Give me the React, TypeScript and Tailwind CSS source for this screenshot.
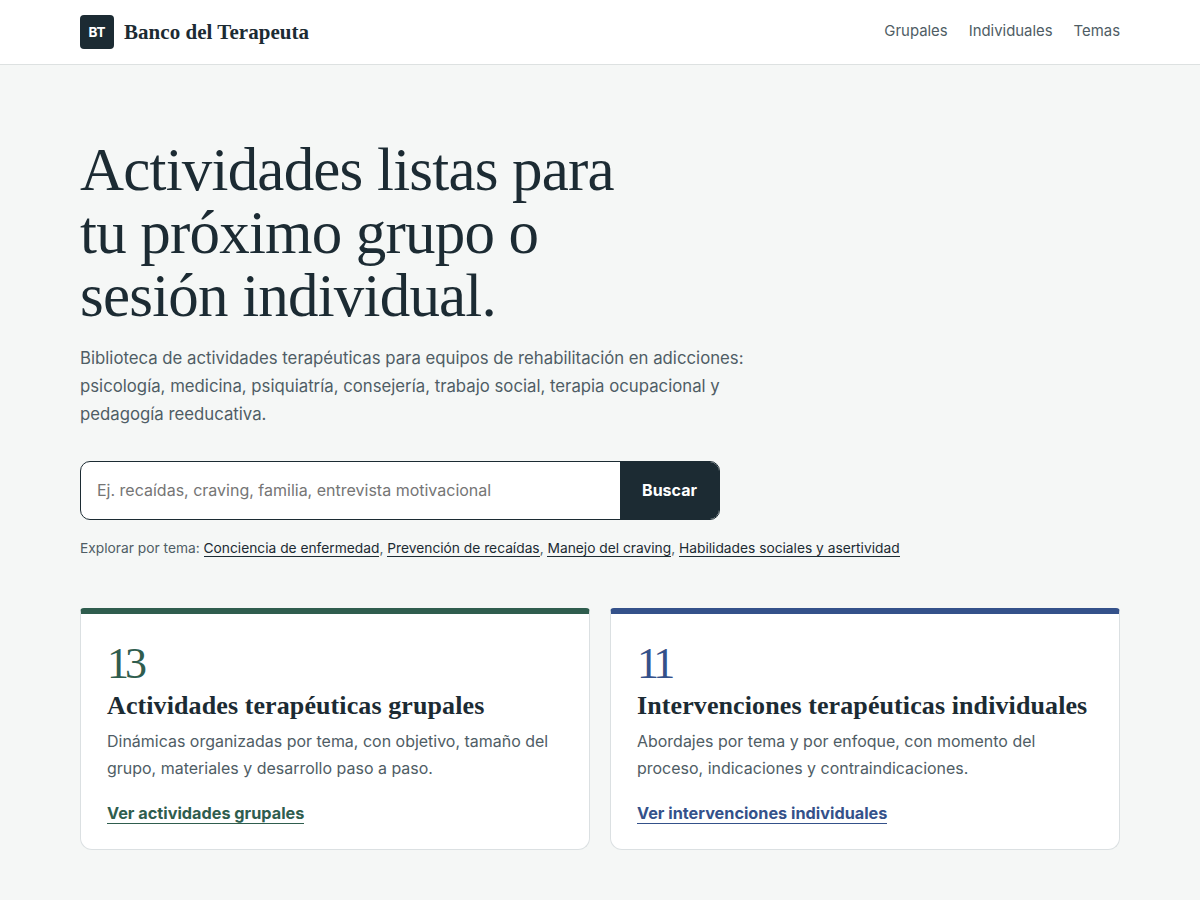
const serif = "font-['Liberation_Serif',serif]";

const topics = [
  'Conciencia de enfermedad',
  'Prevención de recaídas',
  'Manejo del craving',
  'Habilidades sociales y asertividad',
];

export default function App() {
  return (
    <div className="min-h-[900px] bg-[#f5f7f6] font-['Inter',sans-serif] text-[#1c2b33]">
      <header className="h-[65px] border-b border-[#dde1e1] bg-white px-20">
        <div className="flex h-[64px] items-center justify-between">
          <div className="flex items-center gap-2.5">
            <span className="flex h-[34px] w-[34px] items-center justify-center rounded bg-[#1c2b33] text-[13.5px] font-bold text-white">
              BT
            </span>
            <span className={`${serif} pt-0.5 text-[21px] font-bold tracking-[0.04px]`}>Banco del Terapeuta</span>
          </div>
          <nav className="flex gap-[21px] pb-0.5 text-[14.9px] text-[#4f5d65]">
            <a>Grupales</a>
            <a>Individuales</a>
            <a>Temas</a>
          </nav>
        </div>
      </header>

      <main className="px-20 pt-[73px]">
        <h1 className={`${serif} text-[61px] leading-[63px] font-normal tracking-[-0.8px]`}>
          Actividades listas para
          <br />
          tu próximo grupo o
          <br />
          sesión individual.
        </h1>
        <p className="mt-[17px] w-[680px] text-[16.75px] leading-[28px] text-[#4f5d65]">
          Biblioteca de actividades terapéuticas para equipos de rehabilitación en adicciones: psicología, medicina,
          psiquiatría, consejería, trabajo social, terapia ocupacional y pedagogía reeducativa.
        </p>

        <form className="mt-[33px] flex h-[59px] w-[640px] overflow-hidden rounded-[10px] border border-[#1c2b33] bg-white">
          <input
            className="min-w-0 flex-1 px-4 pb-0.5 text-[16px] outline-none placeholder:text-[#757575]"
            placeholder="Ej. recaídas, craving, familia, entrevista motivacional"
          />
          <button type="button" className="w-[99px] bg-[#1c2b33] pb-0.5 text-[16px] font-bold text-white">
            Buscar
          </button>
        </form>

        <p className="mt-[18px] text-[13.78px] leading-[21px] text-[#4f5d65]">
          Explorar por tema:{' '}
          {topics.map((t, i) => (
            <span key={t}>
              <a className="border-b border-[#1c2b33] text-[#1c2b33]">{t}</a>
              {i < topics.length - 1 ? ', ' : ''}
            </span>
          ))}
        </p>

        <div className="mt-[49px] grid grid-cols-2 gap-5">
          <Card
            accent="border-t-[#2f5d4e]"
            tone="text-[#2f5d4e]"
            line="border-[#2f5d4e]"
            count="13"
            title="Actividades terapéuticas grupales"
            text="Dinámicas organizadas por tema, con objetivo, tamaño del grupo, materiales y desarrollo paso a paso."
            link="Ver actividades grupales"
          />
          <Card
            accent="border-t-[#34518a]"
            tone="text-[#34518a]"
            line="border-[#34518a]"
            count="11"
            title="Intervenciones terapéuticas individuales"
            text="Abordajes por tema y por enfoque, con momento del proceso, indicaciones y contraindicaciones."
            link="Ver intervenciones individuales"
          />
        </div>
      </main>
    </div>
  );
}

type CardProps = {
  accent: string;
  tone: string;
  line: string;
  count: string;
  title: string;
  text: string;
  link: string;
};

function Card({ accent, tone, line, count, title, text, link }: CardProps) {
  return (
    <section
      className={`h-[242px] rounded-t-[4px] rounded-b-xl border border-t-[6px] border-[#dbe0e2] ${accent} bg-white px-[26px] pt-[26px]`}
    >
      <div className={`${serif} text-[44px] leading-[48px] tracking-[-4px] ${tone}`}>{count}</div>
      <h2 className={`${serif} mt-[2px] text-[26px] leading-[32px] font-bold tracking-[0.1px]`}>{title}</h2>
      <p className="mt-[6px] text-[15.97px] leading-[27px] text-[#4f5d65]">{text}</p>
      <a className={`mt-[21px] inline-block border-b ${line} text-[16.25px] leading-[20px] font-bold ${tone}`}>{link}</a>
    </section>
  );
}
